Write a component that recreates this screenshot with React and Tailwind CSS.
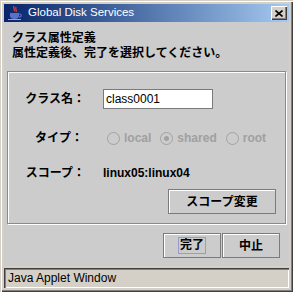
import React from 'react';

const jp = "font-['Liberation_Sans','Noto_Sans_CJK_JP',sans-serif]";

function JavaCup() {
  return (
    <svg width="16" height="16" viewBox="0 0 16 16" className="shrink-0">
      <path d="M7 1 C5 3 9 4 7 6 M9 2 C8 4 10 5 9 7" stroke="#e0402a" strokeWidth="1.3" fill="none" />
      <path d="M3 8 H12 V11 C12 13 10 14 7.5 14 C5 14 3 13 3 11 Z" fill="#5b6fc8" />
      <path d="M12 9 C15 9 15 12 12 12" stroke="#5b6fc8" strokeWidth="1.2" fill="none" />
      <path d="M1 14.5 H14" stroke="#8fa0e0" strokeWidth="1" />
    </svg>
  );
}

function Radio({ label, checked }) {
  return (
    <div className="flex items-center gap-[4px]">
      <div className="w-[13px] h-[13px] rounded-full border border-[#a2a2a2] flex items-center justify-center">
        {checked && <div className="w-[5px] h-[5px] rounded-full bg-[#a2a2a2]" />}
      </div>
      <span className="text-[12px] font-bold text-[#a0a0a0] font-['Liberation_Sans',sans-serif]">{label}</span>
    </div>
  );
}

export default function App() {
  return (
    <div className="w-[293px] h-[292px] bg-[#d4d0c8] px-[4px] pt-[4px] pb-[4px] flex flex-col shadow-[inset_1px_1px_#d4d0c8,inset_2px_2px_#ffffff,inset_-1px_-1px_#404040,inset_-2px_-2px_#808080]">
      {/* Title bar */}
      <div className="h-[18px] bg-gradient-to-r from-[#0a246a] to-[#a6caf0] flex items-center pl-[3px] pr-[2px]">
        <JavaCup />
        <span className="ml-[5px] text-white text-[11.5px] font-['Liberation_Sans',sans-serif] leading-none">
          Global Disk Services
        </span>
        <div className="ml-auto w-[16px] h-[14px] bg-[#d4d0c8] flex items-center justify-center shadow-[inset_1px_1px_#ffffff,inset_-1px_-1px_#404040,inset_-2px_-2px_#808080]">
          <svg width="8" height="7" viewBox="0 0 8 7">
            <path d="M0.5 0.5 L7.5 6.5 M7.5 0.5 L0.5 6.5" stroke="#000" strokeWidth="1.6" />
          </svg>
        </div>
      </div>

      {/* Content */}
      <div className="h-[244px] bg-[#cccccc] flex flex-col">
        <div className={`pt-[9px] pl-[8px] text-[12px] leading-[15px] font-bold text-black ${jp}`}>
          <div>クラス属性定義</div>
          <div>属性定義後、完了を選択してください。</div>
        </div>

        <div className="mt-[10px] mx-[3px] h-[153px] border border-[#8a8a8a] shadow-[inset_1px_1px_#ffffff,1px_1px_#ffffff] flex flex-col pt-[17px] pr-[9px] pb-[8px]">
          <div className="flex items-center h-[20px]">
            <div className={`w-[77px] text-right text-[12px] font-bold text-black ${jp}`}>クラス名：</div>
            <div className="ml-[18px] w-[110px] h-[20px] bg-white border border-[#7a7a7a] flex items-center pl-[2px]">
              <span className="text-[12px] text-black font-['Liberation_Sans',sans-serif]">class0001</span>
            </div>
          </div>

          <div className="flex items-center h-[20px] mt-[19px]">
            <div className={`w-[75px] text-right text-[12px] font-bold text-black ${jp}`}>タイプ：</div>
            <div className="ml-[24px] flex items-center gap-[4px]">
              <Radio label="local" />
              <div className="ml-[5px]"><Radio label="shared" checked /></div>
              <div className="ml-[5px]"><Radio label="root" /></div>
            </div>
          </div>

          <div className="flex items-center h-[20px] mt-[15px]">
            <div className={`w-[77px] text-right text-[12px] font-bold text-black ${jp}`}>スコープ：</div>
            <span className="ml-[18px] text-[12px] font-bold text-black font-['Liberation_Sans',sans-serif]">linux05:linux04</span>
          </div>

          <div className="flex justify-end mt-[6px]">
            <button className={`w-[108px] h-[25px] border border-[#7b7b7b] shadow-[inset_1px_1px_#ffffff] bg-[#cccccc] text-[12px] font-bold text-black ${jp}`}>
              スコープ変更
            </button>
          </div>
        </div>

        <div className="mt-[9px] flex justify-end gap-[1px] pr-[9px]">
          <button className={`w-[58px] h-[25px] border border-[#7b7b7b] shadow-[inset_1px_1px_#ffffff] bg-[#cccccc] flex items-center justify-center text-[12px] font-bold text-black ${jp}`}>
            <span className="border border-[#9a9ad2] px-[1px] leading-[15px]">完了</span>
          </button>
          <button className={`w-[58px] h-[25px] border border-[#7b7b7b] shadow-[inset_1px_1px_#ffffff] bg-[#cccccc] text-[12px] font-bold text-black ${jp}`}>
            中止
          </button>
        </div>
      </div>

      {/* Status bar */}
      <div className="mt-[2px] h-[20px] bg-[#d4d0c8] flex items-center pl-[4px] shadow-[inset_1px_1px_#404040,inset_2px_2px_#808080,inset_-1px_-1px_#ffffff]">
        <span className="text-[12px] text-black font-['Liberation_Sans',sans-serif]">Java Applet Window</span>
      </div>
    </div>
  );
}
